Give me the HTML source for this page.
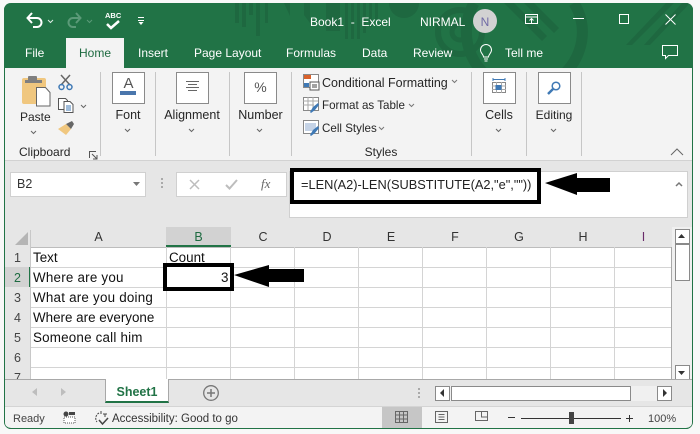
<!DOCTYPE html>
<html><head><meta charset="utf-8"><style>
html,body{margin:0;padding:0;width:700px;height:434px;overflow:hidden;background:#f8f8f8;font-family:"Liberation Sans",sans-serif}
#r{position:absolute;left:0;top:0;width:700px;height:434px;overflow:hidden}
.a{position:absolute}
.t{position:absolute;white-space:nowrap;font-size:12.5px;line-height:16px;color:#262626}
.w{color:#fff;font-size:12px}
.c{text-align:center}
.b{position:absolute;width:31px;height:30px;top:72px;background:#fff;border:1px solid #8a8a8a}
.sep{position:absolute;width:1px;top:72px;height:84px;background:#c6c6c6}
.hl{position:absolute;left:31px;width:641px;height:1px;background:#d4d4d4}
.vl{position:absolute;top:247px;height:133px;width:1px;background:#d4d4d4}
.ch{position:absolute;top:228px;font-size:12.5px;line-height:18px;text-align:center;color:#333}
.rh{position:absolute;left:5px;width:25px;text-align:center;font-size:12.5px;line-height:20px;color:#444}
.cell{position:absolute;left:33px;font-size:13.4px;line-height:20px;color:#111;white-space:nowrap}
svg{position:absolute;overflow:visible}
</style></head><body><div id="r">
<div class="a" style="left:4px;top:3px;width:689px;height:426px;background:#e6e6e6;border-radius:7px 7px 7px 7px;overflow:hidden;box-sizing:border-box;border:1px solid #217346;border-top:0">
</div>
<div class="a" style="left:4px;top:3px;width:689px;height:65px;background:#217346;border-radius:7px 7px 0 0;overflow:hidden">
<svg width="689" height="65" style="left:0;top:0" fill="#1e6840">
<rect x="231" y="0" width="4" height="20"/><rect x="238" y="0" width="4" height="24"/><rect x="245" y="0" width="4" height="12"/><rect x="252" y="0" width="4" height="33"/><rect x="261" y="0" width="3" height="20"/>
<path d="M280 0h6v13zM300 0h6v20l-6-8zM322 0h14v28h-14zM341 0h3v36h-3zM347 0h3v36h-3zM353 0h3v36h-3zM359 0h3v30h-3zM365 0h3v24h-3zM371 0h3v16h-3z"/>
<circle cx="400" cy="0" r="15"/>
<circle cx="456" cy="29" r="22" fill="none" stroke="#1e6840" stroke-width="6"/><circle cx="456" cy="29" r="8" fill="none" stroke="#1e6840" stroke-width="5"/>
<path d="M470 0a58 58 0 1 0 108 22 58 58 0 0 0-8-22" fill="none" stroke="#1e6840" stroke-width="11" />
<path d="M500 0l38 38 5-5-33-33zM520 0l30 30 5-5-25-25zM610 0l6 6zM622 42l40-42h8l-42 42zM640 42l38-42h8l-40 42z"/>
</svg>
</div>
<!-- QAT -->
<svg width="20" height="18" style="left:26px;top:11px" fill="none" stroke="#fff" stroke-width="2"><path d="M2 7h9a4.500 4.500 0 0 1 0 9H7"/><path d="M6 2L1.500 7 6 12"/></svg>
<svg width="8" height="5" style="left:47px;top:19px" fill="none" stroke="#dfeee6" stroke-width="1"><path d="M1 1l2.500 2.500L6 1"/></svg>
<svg width="20" height="18" style="left:66px;top:11px" fill="none" stroke="#5b9a78" stroke-width="2"><path d="M14 7H7a4.500 4.500 0 0 0 0 9h3"/><path d="M10 2l4.500 5L10 12"/></svg>
<svg width="8" height="5" style="left:86px;top:19px" fill="none" stroke="#5b9a78" stroke-width="1"><path d="M1 1l2.500 2.500L6 1"/></svg>
<div class="t w" style="left:105px;top:11px;font-size:7.500px;line-height:9px;font-weight:bold">ABC</div>
<svg width="16" height="12" style="left:105px;top:19px" fill="none" stroke="#fff" stroke-width="2.500"><path d="M2 5l4 4 8-7"/></svg>
<svg width="8" height="8" style="left:137px;top:17px" fill="#fff"><rect x="1" y="0" width="6" height="1"/><rect x="1" y="3" width="6" height="1"/><path d="M1.500 5h5L4 8z"/></svg>
<div class="t w" style="left:310px;top:14px">Book1 &nbsp;-&nbsp; Excel</div>
<div class="t w" style="left:420px;top:14px">NIRMAL</div>
<div class="a" style="left:473px;top:9px;width:24px;height:24px;border-radius:50%;background:#d2d2d2"></div>
<div class="t c" style="left:473px;top:14px;width:24px;color:#6f6aa5;font-size:12px">N</div>
<svg width="14" height="11" style="left:525px;top:14px" fill="none" stroke="#fff" stroke-width="1"><rect x="0.500" y="0.500" width="12" height="9"/><path d="M0.500 3h12M6.500 9V4.500M4.500 6.500l2-2 2 2"/></svg>
<div class="a" style="left:573px;top:18px;width:11px;height:1px;background:#fff"></div>
<div class="a" style="left:619px;top:14px;width:8px;height:8px;border:1px solid #fff"></div>
<svg width="11" height="11" style="left:665px;top:14px" stroke="#fff" stroke-width="1"><path d="M0.500 0.500l10 10M10.500 0.500l-10 10"/></svg>
<!-- Tabs -->
<div class="a" style="left:66px;top:38px;width:58px;height:31px;background:#f3f3f3"></div>
<div class="t w" style="left:25px;top:45px">File</div>
<div class="t c" style="left:66px;top:45px;width:58px;color:#1e6b41;font-size:12px">Home</div>
<div class="t w" style="left:138px;top:45px">Insert</div>
<div class="t w" style="left:194px;top:45px">Page Layout</div>
<div class="t w" style="left:286px;top:45px">Formulas</div>
<div class="t w" style="left:362px;top:45px">Data</div>
<div class="t w" style="left:413px;top:45px">Review</div>
<svg width="14" height="19" style="left:479px;top:44px" fill="none" stroke="#fff" stroke-width="1"><path d="M4.500 13c0-2.500-3-4-3-7a5.500 5.500 0 0 1 11 0c0 3-3 4.500-3 7zM5 15h4M5.500 17h3"/></svg>
<div class="t w" style="left:505px;top:45px">Tell me</div>
<svg width="17" height="16" style="left:662px;top:45px" fill="none" stroke="#fff" stroke-width="1"><path d="M0.500 0.500h15v10H6.500l-3 3v-3h-3z"/></svg>
<!-- Ribbon -->
<div class="a" style="left:5px;top:68px;width:687px;height:92px;background:#f3f3f3;border-bottom:1px solid #d2d2d2;box-sizing:content-box"></div>
<div class="sep" style="left:100px"></div><div class="sep" style="left:155px"></div><div class="sep" style="left:229px"></div><div class="sep" style="left:291px"></div><div class="sep" style="left:471px"></div><div class="sep" style="left:526px"></div><div class="sep" style="left:581px"></div>
<!-- Paste -->
<svg width="30" height="36" style="left:21px;top:75px"><rect x="1" y="3" width="24" height="26" rx="2" fill="#f0c77f"/><rect x="7" y="1" width="9" height="5" rx="1" fill="#7f7f7f"/><rect x="4" y="5" width="17" height="3" fill="#7f7f7f"/><path d="M15.500 12.500h9l4.500 5v13.500H15.500z" fill="#fff" stroke="#666"/></svg>
<div class="t" style="left:20px;top:109px;font-size:12px">Paste</div>
<svg width="8" height="5" style="left:30px;top:130px" fill="none" stroke="#666"><path d="M1 1l2.500 2.500L6 1"/></svg>
<svg width="16" height="17" style="left:58px;top:74px" fill="none"><path d="M3 1l9 10M12 1l-9 10" stroke="#666" stroke-width="1.500"/><circle cx="3.500" cy="13" r="2.500" stroke="#3f79b5" stroke-width="1.500"/><circle cx="11.500" cy="13" r="2.500" stroke="#3f79b5" stroke-width="1.500"/></svg>
<svg width="16" height="15" style="left:58px;top:98px" fill="#fff" stroke="#555"><path d="M0.500 0.500h7l2 2v9h-9z"/><path d="M6 3.500h6l3 3v8H6z"/><path d="M8 8h5M8 10h5M8 12h5" stroke="#3f79b5"/></svg>
<svg width="8" height="5" style="left:80px;top:104px" fill="none" stroke="#666"><path d="M1 1l2.500 2.500L6 1"/></svg>
<svg width="17" height="15" style="left:58px;top:121px"><path d="M0 8l8-5 5 5-5 6z" fill="#f0c77f"/><path d="M8 3l6-3 2 3-3 5z" fill="#666"/></svg>
<div class="t" style="left:19px;top:144px;font-size:12px">Clipboard</div>
<svg width="9" height="9" style="left:89px;top:151px" fill="none" stroke="#555"><path d="M0.500 7V0.500H7M3 3l5 5M8 4v4H4"/></svg>
<!-- Font -->
<div class="b" style="left:112px"></div>
<div class="t c" style="left:112px;top:75px;width:33px;font-size:15px;line-height:17px;color:#555">A</div>
<div class="a" style="left:120px;top:91px;width:16px;height:4px;background:#4a76ac"></div>
<div class="t c" style="left:100px;top:107px;width:56px">Font</div>
<svg width="8" height="5" style="left:124px;top:128px" fill="none" stroke="#666"><path d="M1 1l2.500 2.500L6 1"/></svg>
<!-- Alignment -->
<div class="b" style="left:176px"></div>
<svg width="15" height="12" style="left:185px;top:81px" stroke="#666"><path d="M1 0.500h13M3 3.500h9M1 6.500h13M3 9.500h9"/></svg>
<div class="t c" style="left:155px;top:107px;width:74px">Alignment</div>
<svg width="8" height="5" style="left:188px;top:128px" fill="none" stroke="#666"><path d="M1 1l2.500 2.500L6 1"/></svg>
<!-- Number -->
<div class="b" style="left:244px"></div>
<div class="t c" style="left:244px;top:79px;width:33px;font-size:14px;color:#555">%</div>
<div class="t c" style="left:230px;top:107px;width:61px">Number</div>
<svg width="8" height="5" style="left:256px;top:128px" fill="none" stroke="#666"><path d="M1 1l2.500 2.500L6 1"/></svg>
<!-- Styles -->
<svg width="17" height="17" style="left:303px;top:74px"><rect x="0.500" y="0.500" width="15" height="13" fill="#fff" stroke="#888"/><rect x="1" y="1" width="7" height="4" fill="#d9622b"/><rect x="1" y="9" width="5" height="4" fill="#3f79b5"/><rect x="7" y="8" width="9" height="8" fill="#fff" stroke="#555"/><path d="M9 11h5M9 13h5" stroke="#444"/></svg>
<div class="t" style="left:322px;top:75px">Conditional Formatting</div>
<svg width="8" height="5" style="left:451px;top:79px" fill="none" stroke="#777"><path d="M1 1l2.500 2.500L6 1"/></svg>
<svg width="17" height="17" style="left:303px;top:97px"><rect x="0.500" y="0.500" width="15" height="13" fill="#fff" stroke="#888"/><path d="M0 4h15M0 8h11M5 0v13M10 0v11" stroke="#aaa"/><path d="M7 15l3-5 5-4 1 2-4 5-4 3z" fill="#3f79b5"/></svg>
<div class="t" style="left:322px;top:98px;font-size:11.6px">Format as Table</div>
<svg width="8" height="5" style="left:408px;top:103px" fill="none" stroke="#777"><path d="M1 1l2.500 2.500L6 1"/></svg>
<svg width="17" height="17" style="left:303px;top:120px"><rect x="0.500" y="0.500" width="15" height="13" fill="#fff" stroke="#888"/><rect x="2" y="3" width="11" height="8" fill="#c5d3e6"/><path d="M7 15l3-5 5-4 1 2-4 5-4 3z" fill="#3f79b5"/></svg>
<div class="t" style="left:322px;top:121px;font-size:11.6px">Cell Styles</div>
<svg width="8" height="5" style="left:378px;top:126px" fill="none" stroke="#777"><path d="M1 1l2.500 2.500L6 1"/></svg>
<div class="t c" style="left:291px;top:144px;width:180px;font-size:12px">Styles</div>
<!-- Cells -->
<div class="b" style="left:483px"></div>
<svg width="16" height="17" style="left:491px;top:78px" fill="none"><path d="M2 1.500h12M2 0v3M14 0v3" stroke="#3f79b5"/><rect x="1.500" y="4.500" width="13" height="10" fill="#fff" stroke="#888"/><path d="M1 8h14M1 11.500h14M5.500 4v11M10.500 4v11" stroke="#aaa"/><rect x="4.500" y="7" width="6" height="5" fill="#3f79b5"/></svg>
<div class="t c" style="left:471px;top:107px;width:56px">Cells</div>
<svg width="8" height="5" style="left:495px;top:128px" fill="none" stroke="#666"><path d="M1 1l2.500 2.500L6 1"/></svg>
<!-- Editing -->
<div class="b" style="left:538px"></div>
<svg width="16" height="16" style="left:546px;top:80px" fill="none" stroke="#3f79b5"><circle cx="10" cy="6" r="3.800" stroke-width="1.500"/><path d="M7 9l-5 5" stroke-width="2.500"/></svg>
<div class="t c" style="left:526px;top:107px;width:56px;font-size:12px">Editing</div>
<svg width="8" height="5" style="left:550px;top:128px" fill="none" stroke="#666"><path d="M1 1l2.500 2.500L6 1"/></svg>
<svg width="15" height="8" style="left:670px;top:148px" fill="none" stroke="#666"><path d="M1 7l6-6 6 6"/></svg>
<!-- Formula bar -->
<div class="a" style="left:10px;top:172px;width:134px;height:23px;background:#fff;border:1px solid #d0d0d0"></div>
<div class="t" style="left:17px;top:176px;font-size:12.5px;color:#333">B2</div>
<svg width="8" height="5" style="left:133px;top:182px" fill="#777"><path d="M0 0h7L3.500 4z"/></svg>
<div class="a" style="left:161px;top:178px;width:2px;height:2px;background:#aaa;box-shadow:0 4px #aaa,0 8px #aaa"></div>
<div class="a" style="left:176px;top:172px;width:109px;height:23px;background:#fff;border:1px solid #d0d0d0"></div>
<svg width="12" height="11" style="left:189px;top:179px" stroke="#bdbdbd" stroke-width="1.500"><path d="M1 1l9 9M10 1l-9 9"/></svg>
<svg width="13" height="11" style="left:225px;top:179px" fill="none" stroke="#bdbdbd" stroke-width="2"><path d="M1 6l3.500 3.500L12 1"/></svg>
<div class="t" style="left:261px;top:176px;font-family:'Liberation Serif',serif;font-style:italic;color:#666;font-size:13px">fx</div>
<div class="a" style="left:289px;top:171px;width:397px;height:45px;background:#fff;border:1px solid #d0d0d0"></div>
<div class="a" style="left:290px;top:168px;width:251px;height:36px;box-sizing:border-box;border:4px solid #000"></div>
<div class="t" style="left:301px;top:177px;font-size:12.8px;color:#222">=LEN(A2)-LEN(SUBSTITUTE(A2,"e",""))</div>
<svg width="9" height="6" style="left:675px;top:181px" fill="none" stroke="#777" stroke-width="1.500"><path d="M1 5l3-3 3 3"/></svg>
<svg width="70" height="26" style="left:543px;top:171px"><path d="M2 12L34 2v5h33v14H34v3z" fill="#000"/></svg>
<!-- Column headers -->
<div class="a" style="left:5px;top:227px;width:667px;height:20px;background:#e6e6e6"></div>
<svg width="14" height="14" style="left:15px;top:232px"><path d="M13 0v13H0z" fill="#b5b5b5"/></svg>
<div class="a" style="left:166px;top:227px;width:65px;height:20px;background:#d2d2d2;border-bottom:0"></div>
<div class="a" style="left:166px;top:245px;width:65px;height:2px;background:#217346"></div>
<div class="ch" style="left:31px;width:135px">A</div><div class="ch" style="left:166px;width:65px;color:#1e6b41">B</div><div class="ch" style="left:231px;width:64px">C</div><div class="ch" style="left:295px;width:64px">D</div><div class="ch" style="left:359px;width:64px">E</div><div class="ch" style="left:423px;width:64px">F</div><div class="ch" style="left:487px;width:64px">G</div><div class="ch" style="left:551px;width:64px">H</div><div class="ch" style="left:615px;width:57px;color:#6a2b6a">I</div>
<!-- Grid -->
<div class="a" style="left:31px;top:247px;width:641px;height:132px;background:#fff"></div>
<div class="a" style="left:5px;top:267px;width:25px;height:20px;background:#d2d2d2"></div>
<div class="a" style="left:29px;top:267px;width:2px;height:20px;background:#217346"></div>
<div class="a" style="left:30px;top:230px;width:1px;height:150px;background:#c8c8c8"></div>
<div class="hl" style="top:267px"></div><div class="hl" style="top:287px"></div><div class="hl" style="top:307px"></div><div class="hl" style="top:327px"></div><div class="hl" style="top:347px"></div><div class="hl" style="top:367px"></div>
<div class="a" style="left:31px;top:247px;width:641px;height:1px;background:#bdbdbd"></div>
<div class="vl" style="left:166px"></div><div class="vl" style="left:230px"></div><div class="vl" style="left:294px"></div><div class="vl" style="left:358px"></div><div class="vl" style="left:422px"></div><div class="vl" style="left:486px"></div><div class="vl" style="left:550px"></div><div class="vl" style="left:614px"></div>
<div class="a" style="left:671px;top:247px;width:1px;height:133px;background:#a8a8a8"></div>
<div class="rh" style="top:248px">1</div><div class="rh" style="top:268px;color:#1e6b41">2</div><div class="rh" style="top:288px">3</div><div class="rh" style="top:308px">4</div><div class="rh" style="top:328px">5</div><div class="rh" style="top:348px">6</div>
<div class="a" style="left:5px;top:368px;width:25px;height:11px;overflow:hidden"><div class="rh" style="left:0;top:0">7</div></div>
<div class="cell" style="top:248px">Text</div><div class="cell" style="top:268px;letter-spacing:.22px">Where are you</div><div class="cell" style="top:288px;letter-spacing:.22px">What are you doing</div><div class="cell" style="top:308px">Where are everyone</div><div class="cell" style="top:328px;letter-spacing:.2px">Someone call him</div>
<div class="cell" style="left:169px;top:248px">Count</div>
<div class="a" style="left:163px;top:263px;width:71px;height:28px;box-sizing:border-box;border:4px solid #000;background:#fff"></div>
<div class="cell" style="left:221px;top:268px">3</div>
<svg width="72" height="26" style="left:233px;top:264px"><path d="M1 11L36 1v4h35v13H36v5z" fill="#000"/></svg>
<!-- Vertical scrollbar -->
<div class="a" style="left:672px;top:227px;width:20px;height:153px;background:#f0f0f0"></div>
<div class="a" style="left:675px;top:229px;width:13px;height:13px;background:#fff;border:1px solid #8a8a8a"></div>
<svg width="8" height="5" style="left:678px;top:234px"><path d="M0 4h7L3.500 0z" fill="#333"/></svg>
<div class="a" style="left:675px;top:244px;width:13px;height:35px;background:#fff;border:1px solid #8a8a8a"></div>
<div class="a" style="left:675px;top:365px;width:13px;height:13px;background:#fff;border:1px solid #8a8a8a"></div>
<svg width="8" height="5" style="left:678px;top:371px"><path d="M0 0h7L3.500 4z" fill="#333"/></svg>
<!-- Sheet tabs -->
<div class="a" style="left:5px;top:379px;width:687px;height:1px;background:#a8a8a8"></div>
<div class="a" style="left:105px;top:379px;width:64px;height:24px;background:#fff;border-left:1px solid #a8a8a8;border-right:1px solid #a8a8a8;box-sizing:border-box;border-bottom:2px solid #217346"></div>
<div class="t c" style="left:105px;top:384px;width:64px;font-weight:bold;color:#217346;font-size:12.5px">Sheet1</div>
<svg width="6" height="8" style="left:32px;top:388px"><path d="M5 0v8L0 4z" fill="#bdbdbd"/></svg>
<svg width="6" height="8" style="left:61px;top:388px"><path d="M0 0v8l5-4z" fill="#bdbdbd"/></svg>
<svg width="16" height="16" style="left:203px;top:385px" fill="none" stroke="#777"><circle cx="8" cy="8" r="7.300" stroke-width="1.300"/><path d="M8 4v8M4 8h8" stroke-width="1.500"/></svg>
<div class="a" style="left:418px;top:388px;width:2px;height:2px;background:#aaa;box-shadow:0 4px #aaa,0 8px #aaa"></div>
<div class="a" style="left:435px;top:386px;width:237px;height:15px;background:#f0f0f0"></div>
<div class="a" style="left:435px;top:386px;width:13px;height:13px;background:#fff;border:1px solid #8a8a8a"></div>
<svg width="5" height="8" style="left:440px;top:389px"><path d="M4 0v8L0 4z" fill="#333"/></svg>
<div class="a" style="left:451px;top:386px;width:178px;height:13px;background:#fff;border:1px solid #8a8a8a"></div>
<div class="a" style="left:657px;top:386px;width:13px;height:13px;background:#fff;border:1px solid #8a8a8a"></div>
<svg width="5" height="8" style="left:663px;top:389px"><path d="M0 0v8l4-4z" fill="#333"/></svg>
<!-- Status bar -->
<div class="a" style="left:5px;top:407px;width:687px;height:22px;background:#f3f3f3;border-radius:0 0 6px 6px;border-bottom:1px solid #217346;box-sizing:border-box"></div>
<div class="a" style="left:5px;top:406px;width:687px;height:1px;background:#d4d4d4"></div>
<div class="t" style="left:13px;top:411px;font-size:11px;color:#444">Ready</div>
<svg width="13" height="12" style="left:63px;top:411px"><circle cx="3" cy="3" r="2.500" fill="#444"/><rect x="6" y="1" width="6" height="3" fill="#444"/><rect x="1" y="6" width="11" height="6" fill="#fff" stroke="#555" stroke-dasharray="1 1"/></svg>
<svg width="16" height="15" style="left:94px;top:411px" fill="none" stroke="#444"><path d="M5 2a6 6 0 0 0-2 9" stroke-dasharray="2 1"/><path d="M7 0v3M11 3v3M13 3h-4" /><path d="M5 9l3.500 4L14 7" stroke-width="1.500"/></svg>
<div class="t" style="left:112px;top:411px;font-size:11.5px;color:#333">Accessibility: Good to go</div>
<div class="a" style="left:382px;top:407px;width:40px;height:21px;background:#c6c6c6"></div>
<svg width="14" height="12" style="left:395px;top:411px" fill="none" stroke="#666"><path d="M0.500 0.500h12v11h-12zM0.500 4h12M0.500 8h12M4.500 0v11M8.500 0v11"/></svg>
<svg width="14" height="12" style="left:435px;top:411px" fill="none" stroke="#666"><rect x="0.500" y="0.500" width="12" height="11"/><path d="M3.500 3.500h6M3.500 6h6M3.500 8.500h6"/></svg>
<svg width="14" height="12" style="left:475px;top:411px" fill="none" stroke="#666"><path d="M0.500 0.500h12v9h-12zM6.500 0v6h6"/></svg>
<div class="a" style="left:508px;top:417px;width:7px;height:1px;background:#333"></div>
<div class="a" style="left:521px;top:418px;width:100px;height:1px;background:#333"></div>
<div class="a" style="left:569px;top:412px;width:5px;height:12px;background:#444"></div>
<div class="a" style="left:626px;top:418px;width:7px;height:1px;background:#333"></div><div class="a" style="left:629px;top:415px;width:1px;height:7px;background:#333"></div>
<div class="t" style="left:648px;top:411px;font-size:11px;color:#444">100%</div>
</div></body></html>
